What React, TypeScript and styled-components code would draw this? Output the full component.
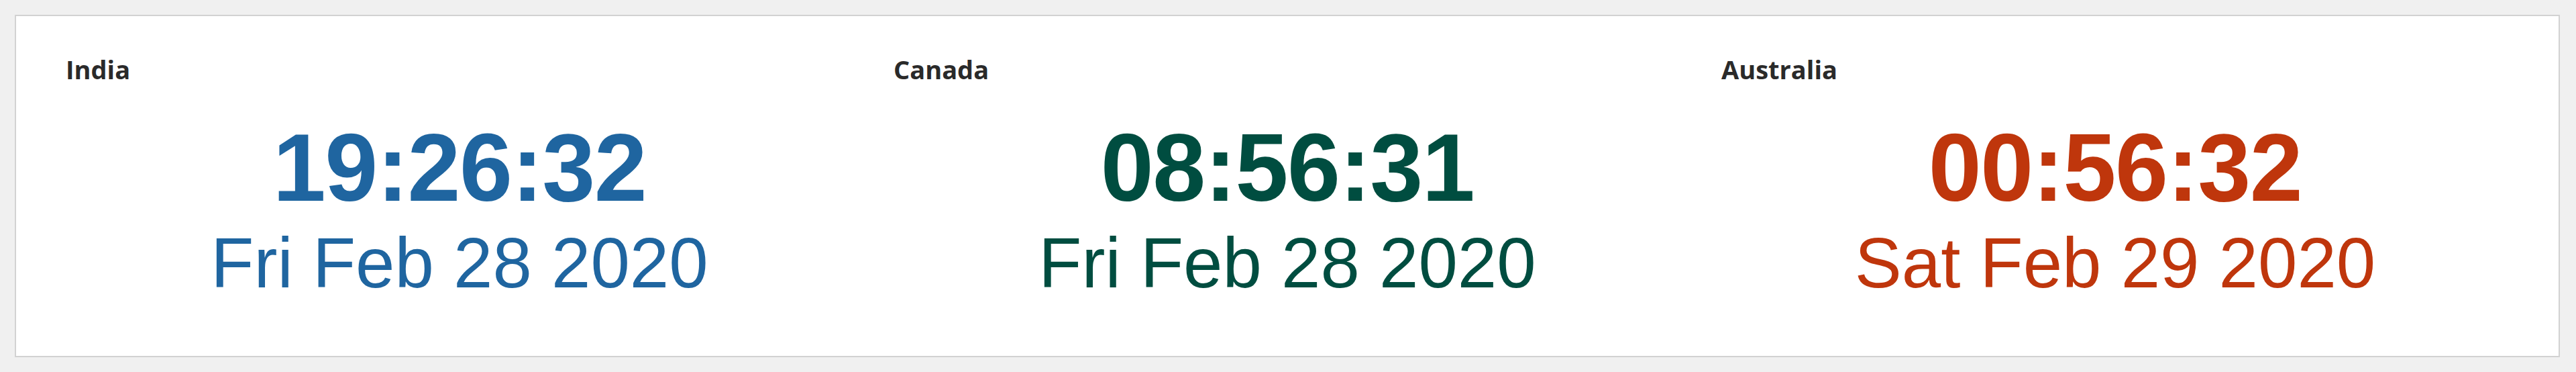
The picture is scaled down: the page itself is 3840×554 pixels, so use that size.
import React from "react";
import styled, { createGlobalStyle } from "styled-components";

const Global = createGlobalStyle`
  html, body { margin: 0; padding: 0; }
  body {
    background: #f0f0f0;
    padding: 22px 24px 22px 22px;
    font-family: "Open Sans", "Liberation Sans", sans-serif;
  }
`;

const Card = styled.section`
  background: #ffffff;
  border: 2px solid #d2d2d2;
  padding: 54px 44px 81px 44px;
  display: grid;
  grid-template-columns: repeat(3, 1fr);
`;

const Zone = styled.div`
  display: flex;
  flex-direction: column;
  padding: 0 30px;
`;

const Label = styled.div`
  font-family: "Open Sans", sans-serif;
  font-weight: 700;
  font-size: 38px;
  line-height: 50px;
  color: #2a2a2a;
`;

const Time = styled.div<{ $color: string }>`
  margin-top: 37px;
  text-align: center;
  font-family: "Liberation Sans", Arial, sans-serif;
  font-weight: 700;
  font-size: 142px;
  line-height: 170px;
  letter-spacing: -1.5px;
  color: ${(p) => p.$color};
`;

const DateLine = styled.div<{ $color: string }>`
  text-align: center;
  font-family: "Liberation Sans", Arial, sans-serif;
  font-weight: 400;
  font-size: 105px;
  line-height: 114px;
  color: ${(p) => p.$color};
`;

const zones = [
  { name: "India", time: "19:26:32", date: "Fri Feb 28 2020", color: "#1f65a0" },
  { name: "Canada", time: "08:56:31", date: "Fri Feb 28 2020", color: "#004d40" },
  { name: "Australia", time: "00:56:32", date: "Sat Feb 29 2020", color: "#bf360c" },
];

export default function App() {
  return (
    <>
      <Global />
      <Card>
        {zones.map((z) => (
          <Zone key={z.name}>
            <Label>{z.name}</Label>
            <Time $color={z.color}>{z.time}</Time>
            <DateLine $color={z.color}>{z.date}</DateLine>
          </Zone>
        ))}
      </Card>
    </>
  );
}
